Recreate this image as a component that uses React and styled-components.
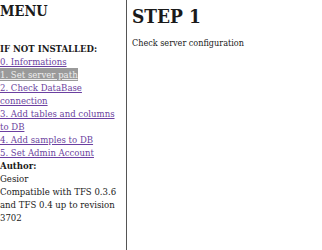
import React from 'react'
import styled, { createGlobalStyle } from 'styled-components'

const Global = createGlobalStyle`
    html, body {
        margin: 0;
        padding: 0;
        background: #fff;
    }
    body {
        font-family: "DejaVu Serif Condensed", "DejaVu Serif", serif;
        font-stretch: condensed;
        color: #1a1a1a;
    }
`

const links = [
    '0. Informations',
    '1. Set server path',
    '2. Check DataBase connection',
    '3. Add tables and columns to DB',
    '4. Add samples to DB',
    '5. Set Admin Account',
]

function App() {
    return (
        <Page>
            <Global />
            <Menu>
                <h2>MENU</h2>
                <h5>IF NOT INSTALLED:</h5>
                {links.map((l, i) => (
                    <MenuLink key={l} href="#" active={i === 1}>{l}</MenuLink>
                ))}
                <b>Author:</b>
                <p>Gesior<br />Compatible with TFS 0.3.6 and TFS 0.4 up to revision 3702</p>
            </Menu>
            <Content>
                <h1>STEP 1</h1>
                <p>Check server configuration</p>
            </Content>
        </Page>
    )
}

const Page = styled.div`
    display: flex;
    height: 250px;
`

const Menu = styled.div`
    width: 120px;
    padding-right: 6px;
    flex-shrink: 0;
    border-right: 1px solid #555;
    font-size: 9.5px;
    line-height: 13px;

    h2 {
        margin: 2px 0 0 0;
        font-size: 14.5px;
        line-height: 18px;
        font-weight: bold;
    }

    h5 {
        margin: 22px 0 0 0;
        font-size: 9.5px;
        line-height: 13px;
    }

    b {
        display: block;
    }

    p {
        margin: 0;
    }
`

const MenuLink = styled.a`
    display: block;
    width: fit-content;
    color: ${p => (p.active ? '#eee' : '#6b3fa0')};
    background: ${p => (p.active ? '#9a9a9a' : 'transparent')};
`

const Content = styled.div`
    padding-left: 5px;
    font-size: 9px;

    h1 {
        margin: 4px 0 0 0;
        font-size: 19px;
        line-height: 24px;
    }

    p {
        margin: 10px 0 0 0;
    }
`

export default App
